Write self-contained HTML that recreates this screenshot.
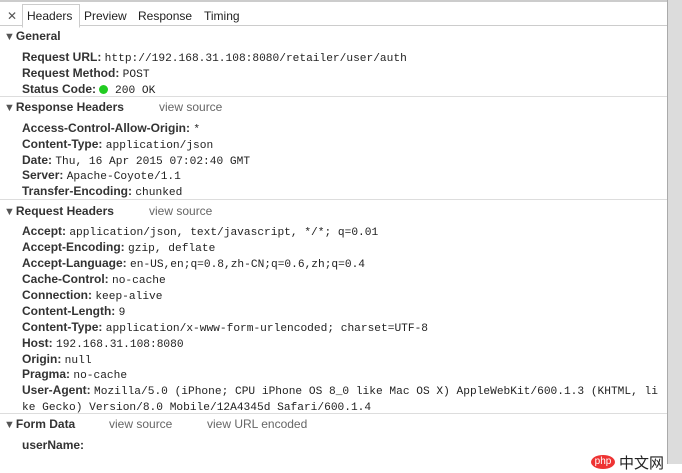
<!DOCTYPE html>
<html><head><meta charset="utf-8"><style>
body{margin:0;width:682px;height:464px;overflow:hidden;background:#fff;font-family:"Liberation Sans",sans-serif;font-size:12px;color:#222;position:relative}
.top{position:absolute;left:0;top:0;width:667px;height:2px;background:#ccc}
.sb{position:absolute;left:667px;top:0;width:15px;height:464px;background:#dcdcdc;border-left:1px solid #aaa}
.tabs{position:absolute;left:0;top:3px;width:667px;height:22px;border-bottom:1px solid #ccc}
.tab{position:absolute;top:6px;font-size:12px;color:#222}
.sel{position:absolute;left:22px;top:1px;width:56px;height:22px;border:1px solid #ccc;border-bottom:1px solid #fff;background:#fff}
.h{position:absolute;left:4px;font-weight:bold;color:#333;white-space:nowrap}
.h .vs{font-weight:normal;color:#666;position:absolute}
.r{position:absolute;left:22px;font-weight:bold;color:#333;white-space:nowrap}
.r span{font-family:"Liberation Mono",monospace;font-weight:normal;font-size:11.2px;color:#222}
.d{position:absolute;left:0;width:667px;height:1px;background:#ddd}
.tri{font-size:11px;margin-right:1px;color:#555}
</style></head><body>
<div class="top"></div><div class="sb"></div>
<div class="tabs">
<div class="tab" style="left:7px;color:#555">✕</div>
<div class="sel"></div>
<div class="tab" style="left:27px">Headers</div>
<div class="tab" style="left:84px">Preview</div>
<div class="tab" style="left:138px">Response</div>
<div class="tab" style="left:204px">Timing</div>
</div>
<div class="h" style="top:29px"><span class="tri">▼</span>General</div>
<div class="r" style="top:50px">Request URL: <span>http://192.168.31.108:8080/retailer/user/auth</span></div>
<div class="r" style="top:66px">Request Method: <span>POST</span></div>
<div class="r" style="top:82px">Status Code: <span><b style="display:inline-block;width:9px;height:9px;border-radius:50%;background:#2c2;vertical-align:-1px"></b> 200 OK</span></div>
<div class="d" style="top:96px"></div>
<div class="h" style="top:100px"><span class="tri">▼</span>Response Headers<span class="vs" style="left:155px">view source</span></div>
<div class="r" style="top:121px">Access-Control-Allow-Origin: <span>*</span></div>
<div class="r" style="top:137px">Content-Type: <span>application/json</span></div>
<div class="r" style="top:153px">Date: <span>Thu, 16 Apr 2015 07:02:40 GMT</span></div>
<div class="r" style="top:168px">Server: <span>Apache-Coyote/1.1</span></div>
<div class="r" style="top:184px">Transfer-Encoding: <span>chunked</span></div>
<div class="d" style="top:199px"></div>
<div class="h" style="top:204px"><span class="tri">▼</span>Request Headers<span class="vs" style="left:145px">view source</span></div>
<div class="r" style="top:224px">Accept: <span>application/json, text/javascript, */*; q=0.01</span></div>
<div class="r" style="top:240px">Accept-Encoding: <span>gzip, deflate</span></div>
<div class="r" style="top:256px">Accept-Language: <span>en-US,en;q=0.8,zh-CN;q=0.6,zh;q=0.4</span></div>
<div class="r" style="top:272px">Cache-Control: <span>no-cache</span></div>
<div class="r" style="top:288px">Connection: <span>keep-alive</span></div>
<div class="r" style="top:304px">Content-Length: <span>9</span></div>
<div class="r" style="top:320px">Content-Type: <span>application/x-www-form-urlencoded; charset=UTF-8</span></div>
<div class="r" style="top:336px">Host: <span>192.168.31.108:8080</span></div>
<div class="r" style="top:352px">Origin: <span>null</span></div>
<div class="r" style="top:367px">Pragma: <span>no-cache</span></div>
<div class="r" style="top:383px">User-Agent: <span>Mozilla/5.0 (iPhone; CPU iPhone OS 8_0 like Mac OS X) AppleWebKit/600.1.3 (KHTML, li</span></div>
<div class="r" style="top:399px"><span>ke Gecko) Version/8.0 Mobile/12A4345d Safari/600.1.4</span></div>
<div class="d" style="top:413px"></div>
<div class="h" style="top:417px"><span class="tri">▼</span>Form Data<span class="vs" style="left:105px">view source</span><span class="vs" style="left:203px">view URL encoded</span></div>
<div class="r" style="top:438px">userName:</div>
<div style="position:absolute;left:591px;top:455px;width:24px;height:14px;border-radius:50%;background:#e33;color:#fff;font-size:10px;text-align:center;line-height:13px">php</div>
<div style="position:absolute;left:619px;top:452px;font-family:'Liberation Sans','Noto Sans CJK SC',sans-serif;font-size:15px;color:#222">中文网</div>
</body></html>
